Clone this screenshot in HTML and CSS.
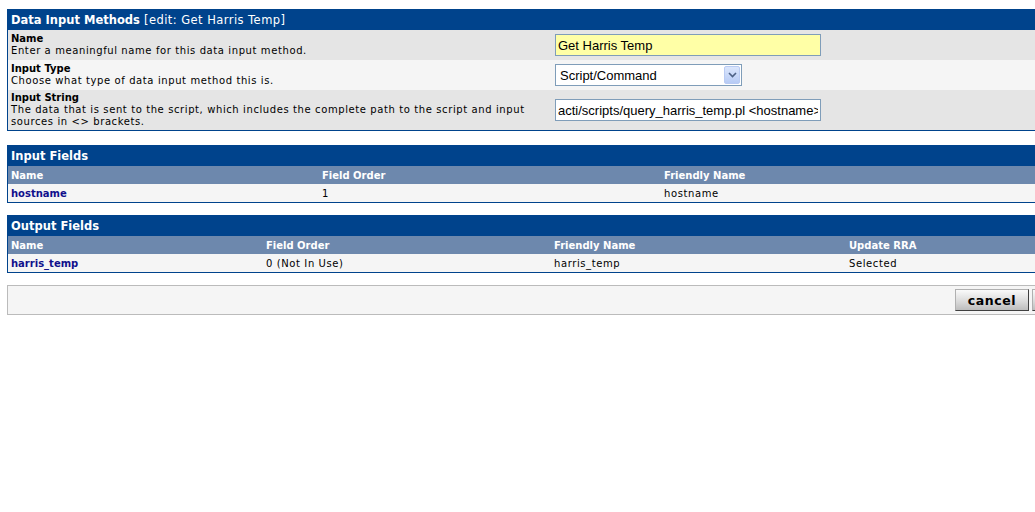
FILE: index.html
```html
<!DOCTYPE html>
<html lang="en">
<head>
<meta charset="UTF-8" />
<title>Data Input Methods</title>
<link rel="stylesheet" href="styles.css">
</head>
<body>

<!-- Edit form -->
<table class="box box-edit">
  <colgroup>
    <col class="w-desc">
    <col>
  </colgroup>
  <tr class="box-head">
    <td colspan="2"><b>Data Input Methods</b> [edit: Get Harris Temp]</td>
  </tr>
  <tr class="row-dark">
    <td class="desc"><b>Name</b><br>Enter a meaningful name for this data input method.</td>
    <td class="field"><input type="text" class="text-input text-focus" value="Get Harris Temp"></td>
  </tr>
  <tr class="row-light">
    <td class="desc"><b>Input Type</b><br>Choose what type of data input method this is.</td>
    <td class="field">
      <div class="select">
        <span class="select-value">Script/Command</span>
        <span class="select-btn">
          <svg width="9" height="6" viewBox="0 0 9 6"><path d="M1 1 L4.5 4.5 L8 1" fill="none" stroke="#4d6185" stroke-width="1.6"/></svg>
        </span>
      </div>
    </td>
  </tr>
  <tr class="row-dark row-tall">
    <td class="desc"><b>Input String</b><br>The data that is sent to the script, which includes the complete path to the script and input sources in &lt;&gt; brackets.</td>
    <td class="field"><input type="text" class="text-input" value="acti/scripts/query_harris_temp.pl &lt;hostname&gt;"></td>
  </tr>
</table>

<!-- Input fields -->
<table class="box list">
  <colgroup>
    <col class="w-in-name">
    <col class="w-in-order">
    <col>
  </colgroup>
  <tr class="box-head">
    <td colspan="3"><b>Input Fields</b></td>
  </tr>
  <tr class="col-head">
    <td>Name</td>
    <td>Field Order</td>
    <td>Friendly Name</td>
  </tr>
  <tr class="row-light">
    <td><a href="#" class="link-edit">hostname</a></td>
    <td>1</td>
    <td>hostname</td>
  </tr>
</table>

<!-- Output fields -->
<table class="box list">
  <colgroup>
    <col class="w-out-name">
    <col class="w-out-order">
    <col class="w-out-friendly">
    <col>
  </colgroup>
  <tr class="box-head">
    <td colspan="4"><b>Output Fields</b></td>
  </tr>
  <tr class="col-head">
    <td>Name</td>
    <td>Field Order</td>
    <td>Friendly Name</td>
    <td>Update RRA</td>
  </tr>
  <tr class="row-light">
    <td><a href="#" class="link-edit">harris_temp</a></td>
    <td>0 (Not In Use)</td>
    <td>harris_temp</td>
    <td>Selected</td>
  </tr>
</table>

<!-- Save bar -->
<div class="save-bar">
  <button class="btn">cancel</button>
  <button class="btn btn-save" title="save" aria-label="save"></button>
</div>

</body>
</html>
```

FILE: styles.css
```css
body {
  margin: 0;
  padding: 9px 0 0 7px;
  font-family: "DejaVu Sans", Verdana, sans-serif;
  font-size: 10px;
  letter-spacing: 0.6px;
  color: #000;
  background: #fff;
  overflow: hidden;
}
b {
  letter-spacing: 0;
}

/* Boxed tables */
.box {
  width: 1100px;
  border: 1px solid #00438c;
  border-collapse: separate;
  border-spacing: 0;
  table-layout: fixed;
  margin-bottom: 12px;
}
.box-edit {
  margin-bottom: 14px;
}
.box td {
  padding: 0 3px;
  vertical-align: middle;
}

.box-head {
  height: 20px;
}
.box-head td {
  background: #00438c;
  color: #fff;
  font-size: 11.5px;
  letter-spacing: 0.45px;
  white-space: nowrap;
}

.row-dark td {
  background: #e5e5e5;
}
.row-light td {
  background: #f5f5f5;
}

/* Column widths */
.w-desc { width: 544px; }
.w-in-name { width: 311px; }
.w-in-order { width: 342px; }
.w-out-name { width: 255px; }
.w-out-order { width: 288px; }
.w-out-friendly { width: 295px; }

/* Edit form rows */
.box-edit tr.row-dark,
.box-edit tr.row-light {
  height: 30px;
}
.box-edit tr.row-tall {
  height: 40px;
}
.desc {
  line-height: 12px;
}

.text-input {
  display: block;
  box-sizing: border-box;
  width: 266px;
  height: 22px;
  margin: 0;
  padding: 0 2px;
  border: 1px solid #7f9db9;
  background: #fff;
  font-family: "Liberation Sans", Arial, sans-serif;
  font-size: 13px;
  letter-spacing: 0;
  color: #000;
}
.text-focus {
  background: #ffffa6;
}

/* XP style drop-down */
.select {
  display: flex;
  align-items: center;
  box-sizing: border-box;
  width: 187px;
  height: 22px;
  border: 1px solid #7f9db9;
  background: #fff;
  font-family: "Liberation Sans", Arial, sans-serif;
  font-size: 13px;
  letter-spacing: 0;
}
.select-value {
  flex: 1;
  padding-left: 4px;
}
.select-btn {
  display: flex;
  align-items: center;
  justify-content: center;
  box-sizing: border-box;
  width: 16px;
  height: 18px;
  margin-right: 1px;
  border: 1px solid #b9cbf3;
  border-radius: 2px;
  background: linear-gradient(#dbe6fc, #b7cbf5);
}

/* Lists */
.col-head {
  height: 18px;
}
.col-head td {
  background: #6d88ad;
  color: #fff;
  font-weight: bold;
  letter-spacing: 0;
}
.list .row-light {
  height: 18px;
}

.link-edit {
  color: #10108c;
  font-weight: bold;
  letter-spacing: 0;
  text-decoration: none;
}

/* Save bar */
.save-bar {
  display: flex;
  justify-content: flex-end;
  gap: 3px;
  box-sizing: border-box;
  width: 1100px;
  padding: 3px 10px 3px 0;
  border: 1px solid #bbb;
  background: #f5f5f5;
}
.btn {
  box-sizing: border-box;
  width: 74px;
  height: 22px;
  padding: 0;
  border: 1px solid;
  border-color: #b0b0b0 #404040 #404040 #b0b0b0;
  background: linear-gradient(#fafafa, #d8d8d8 60%, #bdbdbd);
  font-family: "DejaVu Sans", Verdana, sans-serif;
  font-size: 12.5px;
  font-weight: bold;
  letter-spacing: 0.6px;
  color: #000;
}
.btn-save {
  width: 64px;
}
```
